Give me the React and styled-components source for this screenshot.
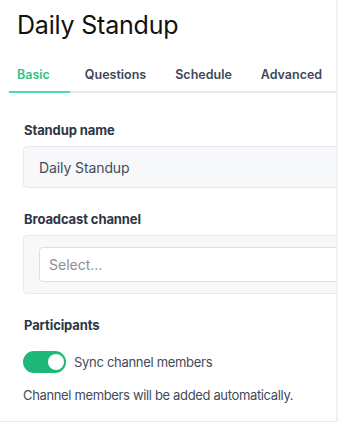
import React from "react"
import styled, { createGlobalStyle } from "styled-components"

const GlobalStyle = createGlobalStyle`
  html, body {
    margin: 0;
    padding: 0;
    background: #ffffff;
  }
  body {
    font-family: Inter, "Noto Sans", sans-serif;
    -webkit-font-smoothing: antialiased;
  }
`

const Panel = styled.main`
  width: 338px;
  height: 422px;
  overflow: hidden;
  box-sizing: border-box;
  border-right: 2px solid #f1f2f4;
  border-bottom: 1px solid #e6eaf2;
  background: #fff;
`

const Title = styled.h1`
  margin: 0;
  padding: 10px 0 0 17px;
  font-size: 25px;
  line-height: 30px;
  font-weight: 400;
  color: #111111;
  letter-spacing: -0.2px;
`

const TabList = styled.nav`
  display: flex;
  margin: 23px 0 0 9px;
  border-bottom: 2px solid #e8e9ee;
`

const Tab = styled.button`
  background: none;
  border: none;
  margin: 0 7px -2px 0;
  padding: 4px 14px 8px 8px;
  font-family: inherit;
  font-size: 12.5px;
  font-weight: 600;
  line-height: 16px;
  color: ${(p) => (p.$active ? "#2fc287" : "#3f4756")};
  border-bottom: 2px solid ${(p) => (p.$active ? "#4fdc9f" : "transparent")};
  cursor: pointer;
  &:first-child {
    padding-right: 20px;
  }
`

const Content = styled.section`
  padding: 29px 0 0 23px;
`

const Field = styled.div`
  margin-bottom: 23px;
`

const Label = styled.label`
  display: block;
  margin: 0 0 8px 1px;
  font-size: 13px;
  font-weight: 700;
  line-height: 16px;
  letter-spacing: -0.1px;
  color: #2e3645;
`

const TextInput = styled.div`
  width: 340px;
  height: 42px;
  box-sizing: border-box;
  display: flex;
  align-items: center;
  padding-left: 15px;
  background: #f7f8fa;
  border: 1px solid #e6e8ec;
  border-radius: 4px;
  font-size: 14px;
  letter-spacing: -0.1px;
  color: #434b5a;
`

const SelectWell = styled.div`
  width: 340px;
  box-sizing: border-box;
  padding: 11px 0 11px 15px;
  background: #f7f8fa;
  border: 1px solid #e8eaee;
  border-radius: 4px;
`

const SelectBox = styled.div`
  height: 35px;
  box-sizing: border-box;
  display: flex;
  align-items: center;
  padding-left: 9px;
  background: #fff;
  border: 1px solid #dcdfe4;
  border-radius: 4px;
  font-size: 14px;
  color: #8a8f98;
`

const ToggleRow = styled.div`
  display: flex;
  align-items: center;
  gap: 8px;
  margin-top: 18px;
`

const Switch = styled.span`
  position: relative;
  width: 43px;
  height: 22px;
  border-radius: 11px;
  background: ${(p) => (p.$on ? "#1db77a" : "#cfd3da")};
  &::after {
    content: "";
    position: absolute;
    top: 3px;
    left: ${(p) => (p.$on ? "25px" : "3px")};
    width: 16px;
    height: 16px;
    border-radius: 50%;
    background: #fff;
  }
`

const ToggleText = styled.span`
  font-size: 13px;
  letter-spacing: -0.3px;
  color: #434b5a;
`

const Help = styled.p`
  margin: 14px 0 0;
  font-size: 13px;
  letter-spacing: -0.35px;
  color: #434b5a;
`

const tabs = ["Basic", "Questions", "Schedule", "Advanced"]

export default function App() {
  return (
    <>
      <GlobalStyle />
      <Panel>
        <Title>Daily Standup</Title>
        <TabList>
          {tabs.map((t, i) => (
            <Tab key={t} $active={i === 0}>
              {t}
            </Tab>
          ))}
        </TabList>
        <Content>
          <Field>
            <Label>Standup name</Label>
            <TextInput>Daily Standup</TextInput>
          </Field>
          <Field>
            <Label>Broadcast channel</Label>
            <SelectWell>
              <SelectBox>Select...</SelectBox>
            </SelectWell>
          </Field>
          <Label>Participants</Label>
          <ToggleRow>
            <Switch $on />
            <ToggleText>Sync channel members</ToggleText>
          </ToggleRow>
          <Help>Channel members will be added automatically.</Help>
        </Content>
      </Panel>
    </>
  )
}
